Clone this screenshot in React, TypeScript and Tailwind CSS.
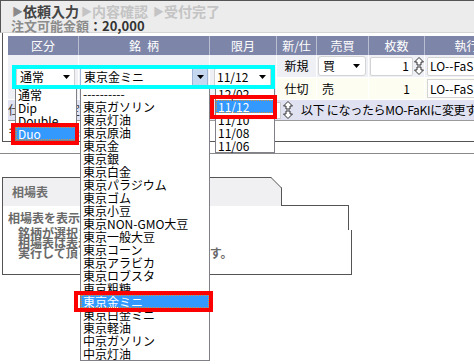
import React from 'react'

const meigara = [
  '----------',
  '東京ガソリン',
  '東京灯油',
  '東京原油',
  '東京金',
  '東京銀',
  '東京白金',
  '東京パラジウム',
  '東京ゴム',
  '東京小豆',
  '東京NON-GMO大豆',
  '東京一般大豆',
  '東京コーン',
  '東京アラビカ',
  '東京ロブスタ',
  '東京粗糖',
  '東京金ミニ',
  '東京白金ミニ',
  '東京軽油',
  '中京ガソリン',
  '中京灯油',
]

const kubun = ['通常', 'Dip', 'Double', 'Duo']
const gengetsu = ['12/02', '11/12', '11/10', '11/08', '11/06']

const Caret = () => (
  <svg width="7" height="4" viewBox="0 0 7 4">
    <path d="M0 0h7L3.5 4z" fill="#000" />
  </svg>
)

const Spin = () => (
  <svg width="10" height="18" viewBox="0 0 10 18">
    <path d="M5 0.5L9.5 5H7V8H3V5H0.5Z" fill="#fff" stroke="#333" />
    <path d="M3 10H7V13H9.5L5 17.5L0.5 13H3Z" fill="#fff" stroke="#333" />
  </svg>
)

const Item = ({ label, active }: { label: string; active: boolean }) => (
  <div
    className={
      active
        ? 'h-[13px] leading-[13px] pl-[2px] whitespace-nowrap bg-[#3399ff] text-white outline-1 outline-dotted outline-[#d09040] -outline-offset-1'
        : 'h-[13px] leading-[13px] pl-[2px] whitespace-nowrap text-black'
    }
  >
    {label}
  </div>
)

const App = () => {
  return (
    <div className="relative w-[474px] h-[364px] overflow-hidden bg-white text-[12px] font-['Noto_Sans_CJK_JP',sans-serif]">
      {/* step header */}
      <div className="h-[33px] border-t border-l border-b border-t-[#555] border-l-[#555] border-b-[#d4d4d4] bg-[#ececec] pl-[11px] pt-[3px]">
        <div className="flex items-center text-[14px] leading-[15px] font-bold">
          <span className="text-[#8a8a8a] text-[11px]">▶</span>
          <span className="text-[#444]">依頼入力</span>
          <span className="ml-[2px] text-[#c4c4c4] text-[11px]">▶</span>
          <span className="text-[#c4c4c4]">内容確認</span>
          <span className="ml-[5px] text-[#c4c4c4] text-[11px]">▶</span>
          <span className="text-[#c4c4c4]">受付完了</span>
        </div>
        <div className="-ml-[1px] text-[13px] leading-[13px] font-bold">
          <span className="text-[#8c8c8c]">注文可能金額</span>
          <span className="text-[#333]">：20,000</span>
        </div>
      </div>

      {/* order panel */}
      <div className="ml-[2px] h-[109px] border-l border-b border-[#555] pl-[5px] pt-[3px]">
        <div className="grid grid-cols-[71px_131px_67px_40px_52px_56px_108px] grid-rows-[19px_23px_22px_21px] w-[525px]">
          {['区分', '銘柄', '限月', '新/仕', '売買', '枚数', '執行条件'].map((h) => (
            <div
              key={h}
              className={
                h === '銘柄'
                  ? 'flex items-center justify-center bg-[#7d85a8] text-white border-r border-[#b9bdd2] tracking-[6px] pl-[6px]'
                  : 'flex items-center justify-center bg-[#7d85a8] text-white border-r border-[#b9bdd2] whitespace-nowrap overflow-hidden'
              }
            >
              {h}
            </div>
          ))}

          <div className="row-span-2 flex items-center pl-[8px] bg-[#eef0f5] border-r border-b border-white">
            <div className="flex items-center justify-between w-[59px] h-[19px] bg-white border border-[#cfcfcf] rounded-[2px] pl-[3px] pr-[4px]">
              <span>通常</span>
              <Caret />
            </div>
          </div>
          <div className="row-span-2 flex items-center pl-[1px] bg-[#eef0f5] border-r border-b border-white">
            <div className="flex items-center justify-between w-[128px] h-[19px] bg-white border border-[#9eb4d8] pl-[3px]">
              <span>東京金ミニ</span>
              <span className="flex items-center justify-center w-[15px] h-[17px] bg-[#c6d7f0] border-l border-[#9eb4d8]">
                <Caret />
              </span>
            </div>
          </div>
          <div className="row-span-2 flex items-center pl-[4px] bg-[#eef0f5] border-r border-b border-white">
            <div className="flex items-center justify-between w-[57px] h-[19px] bg-white border border-[#cfcfcf] rounded-[2px] pl-[2px] pr-[4px]">
              <span>11/12</span>
              <Caret />
            </div>
          </div>

          <div className="flex items-center justify-center bg-[#eef0f5] border-r border-b border-white">新規</div>
          <div className="flex items-center pl-[1px] bg-[#eef0f5] border-r border-b border-white">
            <div className="flex items-center justify-between w-[48px] h-[20px] bg-white border border-[#d4d4d4] rounded-[3px] pl-[4px] pr-[5px]">
              <span>買</span>
              <Caret />
            </div>
          </div>
          <div className="flex items-center pl-[1px] bg-[#eef0f5] border-r border-b border-white">
            <div className="flex items-center justify-end w-[43px] h-[19px] bg-white border border-[#d4d4d4] rounded-[2px] pr-[3px]">1</div>
            <span className="ml-[1px]">
              <Spin />
            </span>
          </div>
          <div className="flex items-center pl-[2px] bg-[#eef0f5] border-b border-white">
            <div className="flex items-center w-[90px] h-[19px] bg-white border border-[#d4d4d4] rounded-[2px] pl-[2px] whitespace-nowrap overflow-hidden">LO--FaS</div>
          </div>

          <div className="flex items-center justify-center bg-[#fdfdf1] border-r border-b border-white">仕切</div>
          <div className="flex items-center pl-[5px] bg-[#fdfdf1] border-r border-b border-white">売</div>
          <div className="flex items-center justify-end pr-[14px] bg-[#fdfdf1] border-r border-b border-white">1</div>
          <div className="flex items-center pl-[2px] bg-[#fdfdf1] border-b border-white">
            <div className="flex items-center w-[90px] h-[19px] bg-white border border-[#d4d4d4] pl-[2px] whitespace-nowrap overflow-hidden">LO--FaS</div>
          </div>

          <div className="col-span-7 flex items-center bg-[#e0e2f1] border-b border-[#9a9a9a] whitespace-nowrap">
            <span className="w-[224px] overflow-hidden text-[#333]">仕切値が指定値※条件を満たした場合</span>
            <span className="w-[49px] h-[17px] bg-white border border-[#ccc]" />
            <span className="ml-[2px]">
              <Spin />
            </span>
            <span className="ml-[8px] tracking-[-0.3px]">以下 になったらMO-FaKIに変更する</span>
          </div>
        </div>
        <div className="h-[20px] leading-[20px] text-[#333] whitespace-nowrap">キャンセル条件を指定できます</div>
      </div>

      <div className="mt-[11px] border-t border-[#8a8a8a]" />

      {/* market table */}
      <div className="ml-[2px] mt-[23px]">
        <div className="flex">
          <div className="relative w-[280px] h-[29px] bg-[#f0f0f2] border-t border-l border-r border-[#555] flex items-center pl-[9px] font-bold text-[#6e6e6e]">
            相場表
            <svg className="absolute -top-[1px] -right-[1px]" width="11" height="11" viewBox="0 0 11 11">
              <path d="M0 0H11V11Z" fill="#fff" />
              <path d="M0 0.5L10.5 11" stroke="#555" />
            </svg>
          </div>
          <div className="w-[67px] h-[29px] border-b border-[#555]" />
        </div>
        <div className="w-[347px] h-[24px] border-l border-r border-[#555]">
          <div className="pl-[5px] pt-[6px] font-bold text-[#6a6a6a] whitespace-nowrap">
            <div className="leading-[12px] mb-[4px]">相場表を表示するには、</div>
            <div className="pl-[10px] leading-[10px]">銘柄が選択されている状態で</div>
            <div className="pl-[10px] leading-[10px]">相場表は表示ボタンを押し、</div>
            <div className="pl-[10px] leading-[10px]">実行して頂くと相場表が表示されます。</div>
          </div>
        </div>
        <div className="w-[350px] h-[45px] border-l border-r border-b border-[#555]" />
      </div>

      {/* open dropdown lists */}
      <div className="absolute left-[15px] top-[87px] w-[62px] bg-white border border-[#7f8088]">
        {kubun.map((k) => (
          <Item key={k} label={k} active={k === 'Duo'} />
        ))}
      </div>
      <div className="absolute left-[80px] top-[86px] w-[130px] bg-white border border-[#7f8088]">
        {meigara.map((m) => (
          <Item key={m} label={m} active={m === '東京金ミニ'} />
        ))}
      </div>
      <div className="absolute left-[215px] top-[86px] w-[60px] bg-white border border-[#7f8088]">
        {gengetsu.map((g) => (
          <Item key={g} label={g} active={g === '11/12'} />
        ))}
      </div>

      {/* annotation frames */}
      <div className="absolute left-[12px] top-[65px] w-[263px] h-[24px] border-4 border-[#00ffff]" />
      <div className="absolute left-[11px] top-[123px] w-[68px] h-[22px] border-4 border-[#ff0000]" />
      <div className="absolute left-[210px] top-[95px] w-[67px] h-[24px] border-4 border-[#ff0000]" />
      <div className="absolute left-[74px] top-[291px] w-[139px] h-[21px] border-4 border-[#ff0000]" />
    </div>
  )
}

export default App
